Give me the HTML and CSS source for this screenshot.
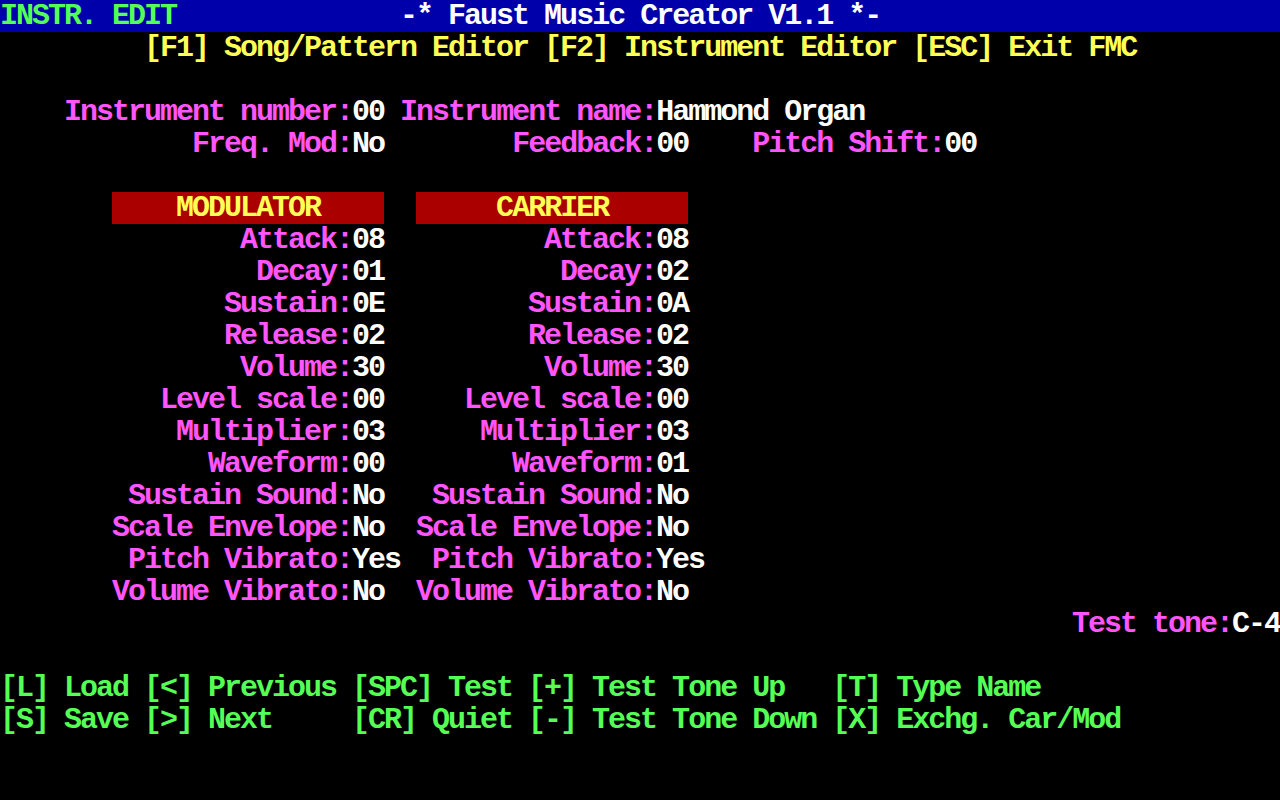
FILE: index.html
```html
<!DOCTYPE html>
<html>
<head>
<meta charset="utf-8">
<link rel="stylesheet" href="styles.css">
</head>
<body>
<div class="screen">
  <div class="row bar"><span class="g">INSTR. EDIT</span>              <span class="w">-* Faust Music Creator V1.1 *-</span></div>
  <div class="row y">         [F1] Song/Pattern Editor [F2] Instrument Editor [ESC] Exit FMC</div>
  <div class="row"> </div>
  <div class="row">    <span class="m">Instrument number:</span><span class="w">00</span> <span class="m">Instrument name:</span><span class="w">Hammond Organ</span></div>
  <div class="row">            <span class="m">Freq. Mod:</span><span class="w">No</span>        <span class="m">Feedback:</span><span class="w">00</span>    <span class="m">Pitch Shift:</span><span class="w">00</span></div>
  <div class="row"> </div>
  <div class="row">       <span class="hdr">    MODULATOR    </span>  <span class="hdr">     CARRIER     </span></div>

  <div class="params">
    <span class="m l1">Attack:</span><span class="w">08</span><span class="m l2">Attack:</span><span class="w">08</span>
    <span class="m l1">Decay:</span><span class="w">01</span><span class="m l2">Decay:</span><span class="w">02</span>
    <span class="m l1">Sustain:</span><span class="w">0E</span><span class="m l2">Sustain:</span><span class="w">0A</span>
    <span class="m l1">Release:</span><span class="w">02</span><span class="m l2">Release:</span><span class="w">02</span>
    <span class="m l1">Volume:</span><span class="w">30</span><span class="m l2">Volume:</span><span class="w">30</span>
    <span class="m l1">Level scale:</span><span class="w">00</span><span class="m l2">Level scale:</span><span class="w">00</span>
    <span class="m l1">Multiplier:</span><span class="w">03</span><span class="m l2">Multiplier:</span><span class="w">03</span>
    <span class="m l1">Waveform:</span><span class="w">00</span><span class="m l2">Waveform:</span><span class="w">01</span>
    <span class="m l1">Sustain Sound:</span><span class="w">No</span><span class="m l2">Sustain Sound:</span><span class="w">No</span>
    <span class="m l1">Scale Envelope:</span><span class="w">No</span><span class="m l2">Scale Envelope:</span><span class="w">No</span>
    <span class="m l1">Pitch Vibrato:</span><span class="w">Yes</span><span class="m l2">Pitch Vibrato:</span><span class="w">Yes</span>
    <span class="m l1">Volume Vibrato:</span><span class="w">No</span><span class="m l2">Volume Vibrato:</span><span class="w">No</span>
  </div>

  <div class="row right"><span class="m">Test tone:</span><span class="w">C-4</span></div>
  <div class="row"> </div>
  <div class="row g">[L] Load [&lt;] Previous [SPC] Test [+] Test Tone Up   [T] Type Name</div>
  <div class="row g">[S] Save [&gt;] Next     [CR] Quiet [-] Test Tone Down [X] Exchg. Car/Mod</div>
  <div class="row"> </div>
  <div class="row"> </div>
</div>
</body>
</html>
```

FILE: styles.css
```css
html, body {
  margin: 0;
  padding: 0;
  background: #000000;
}

.screen {
  width: 1280px;
  height: 800px;
  overflow: hidden;
  background: #000000;
  font-family: "Liberation Mono", "DejaVu Sans Mono", monospace;
  font-weight: bold;
  font-size: 30px;
  letter-spacing: -2px;
  line-height: 32px;
  color: #ffffff;
}

.row {
  height: 32px;
  white-space: pre;
}

.bar {
  background: #0000aa;
}

.right {
  text-align: right;
}

.g { color: #55ff55; }
.y { color: #ffff55; }
.m { color: #ff55ff; }
.w { color: #ffffff; }

.hdr {
  display: inline-block;
  background: #aa0000;
  color: #ffff55;
  height: 32px;
}

.params {
  display: grid;
  grid-template-columns: 352px 64px 240px auto;
  grid-auto-rows: 32px;
  white-space: pre;
}

.l1, .l2 {
  text-align: right;
}
```
